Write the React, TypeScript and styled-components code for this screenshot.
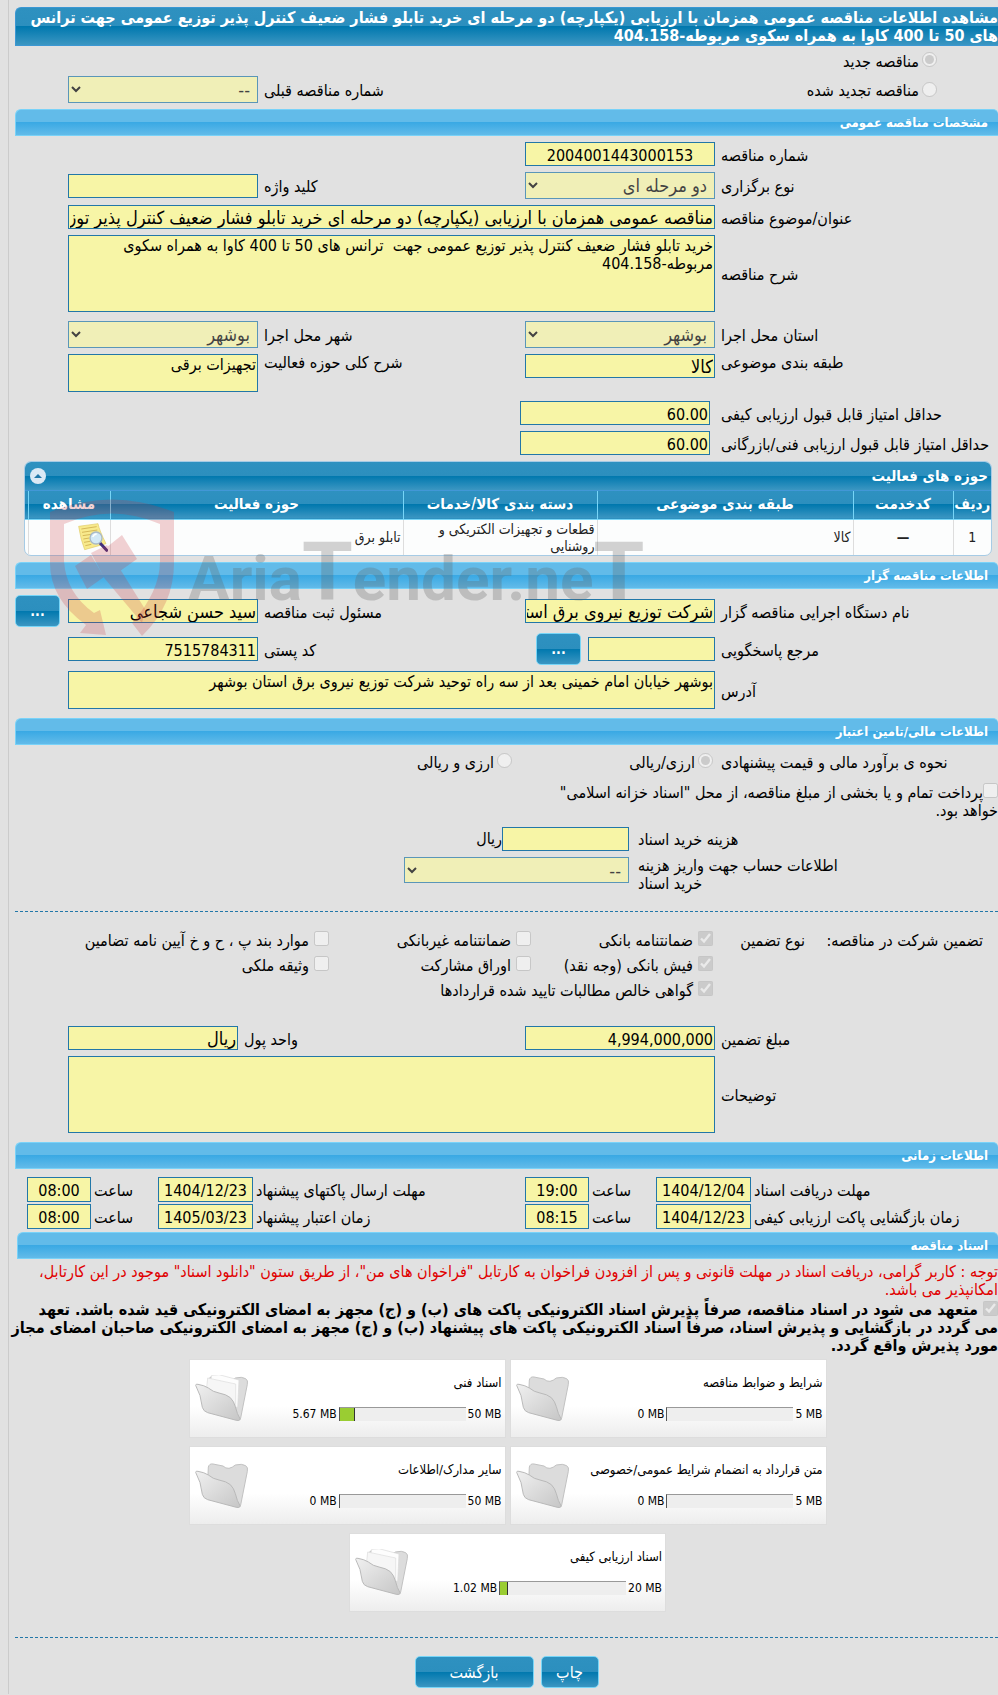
import React from 'react';
import styled, { createGlobalStyle, css } from 'styled-components';

const FONT = '"DejaVu Sans Condensed", "DejaVu Sans", sans-serif';
const EDGE = '#2277a8';
const FIELD = '#f7f5a6';
const DEEP = 'linear-gradient(to bottom, #2e91c0 0, #2c8fbe 50%, #0078ae 50%, #3b96c2 100%)';
const LIGHT = 'linear-gradient(to bottom, #62bbe9 0, #62bbe9 48%, #3aa9e4 50%, #62bbe9 100%)';

const GlobalStyle = createGlobalStyle`
  * { box-sizing: border-box; }
  body { margin: 0; background: #e1e1e1; color: #000; font: 16px/18px ${FONT}; overflow-x: hidden; }
  input, select, textarea, button { font-family: inherit; margin: 0; }
`;

const Page = styled.main`
  margin-left: 8px;
  padding: 7px 0 6px 6px;
  border-left: 1px solid #cbcbcb;
`;

const PageTitle = styled.h1`
  margin: 0;
  padding: 1px 0 0;
  height: 39px;
  font-size: 16px;
  line-height: 18px;
  color: #fff;
  background: ${DEEP};
  border: 1px solid #3b97d3;
  border-right: 0;
  border-radius: 6px 0 0 0;
`;

const SectionTitle = styled.h2`
  margin: 0;
  padding: 0 10px;
  height: 27px;
  font-size: 13px;
  line-height: 26px;
  color: #fff;
  background: ${LIGHT};
  border: 1px solid #79d2f8;
  border-right: 0;
  border-radius: 6px 5px 0 0;
`;

const Form = styled.div<{ $bottom?: number }>`
  display: flex;
  flex-direction: column;
  gap: 6px;
  padding: 6px 0 ${(p) => p.$bottom ?? 6}px;
`;

const Row = styled.div<{ $narrow?: boolean; $top?: boolean; $before?: number }>`
  display: grid;
  grid-template-columns: ${(p) =>
    p.$narrow ? '277fr 190px 275fr 170px 47px' : '277fr 190px 255fr 190px 47px'};
  column-gap: 6px;
  align-items: ${(p) => (p.$top ? 'start' : 'center')};
  margin-top: ${(p) => p.$before ?? 0}px;
`;

const Label = styled.label<{ $flush?: boolean }>`
  padding-top: ${(p) => (p.$flush ? 0 : 3)}px;
  text-align: left;
  white-space: nowrap;
`;

const control = css`
  width: 100%;
  color: #000;
  background: ${FIELD};
  border: 1px solid ${EDGE};
  border-radius: 0;
`;

const TextInput = styled.input<{ $words?: boolean; $center?: boolean }>`
  ${control}
  height: 24px;
  padding: ${(p) => (p.$words ? 0 : 2)}px 1px 0;
  font-size: ${(p) => (p.$words ? 18 : 16)}px;
  text-align: ${(p) => (p.$center ? 'center' : 'right')};
`;

const TextBox = styled.textarea<{ $rows?: 'tall' | 'short' }>`
  ${control}
  display: block;
  height: ${(p) => (p.$rows === 'tall' ? 77 : 38)}px;
  padding: 1px;
  font-size: 16px;
  line-height: 18px;
  resize: none;
  overflow: hidden;
`;

const Select = styled.select`
  ${control}
  height: 27px;
  padding: 0 3px;
  font-size: 18px;
  opacity: 0.7;
`;

const Wide = styled.div`
  grid-column: 2 / 5;
`;

const Inset = styled.div`
  margin: 0 5px 0 -5px;
`;

const Choice = styled.label<{ $gap?: number }>`
  display: flex;
  align-items: center;
  gap: ${(p) => p.$gap ?? 3}px;
  white-space: nowrap;
`;

const Tick = styled.input`
  flex: none;
  width: 15px;
  height: 15px;
  margin: 0 0 4px;
`;

const Kinds = styled.div`
  padding: 4px 0 6px;
  display: flex;
  flex-direction: column;
  gap: 6px;
`;

const KindLine = styled.div`
  grid-column: 1 / 3;
  padding: 3px 61px 0 0;
  height: 20px;
  display: flex;
  align-items: center;
`;

const ActionButton = styled.button<{ $width: number }>`
  width: ${(p) => p.$width}px;
  height: 32px;
  padding: 0;
  color: #fff;
  font-size: 16px;
  background: ${DEEP};
  border: 1px solid #77d5f7;
  border-radius: 5px;
`;

const DotsButton = styled(ActionButton)`
  font-weight: bold;
  font-size: 14px;
  justify-self: end;
`;

const Pair = styled.div`
  display: flex;
  align-items: center;
  gap: 7px;
`;

const ShortInput = styled(TextInput)`
  flex: none;
  width: 127px;
`;

const GridArea = styled.div`
  position: relative;
  padding: 0 6px 6px 9px;
`;

const GridBox = styled.section`
  border: 1px solid #a6cbe5;
  border-radius: 7px;
  overflow: hidden;
  background: #fcfdfd;
`;

const GridHead = styled.header`
  height: 29px;
  padding: 0 3px 0 5px;
  display: flex;
  align-items: center;
  justify-content: space-between;
  background: ${DEEP};
  border-bottom: 1px solid #4297d7;
`;

const GridTitle = styled.h3`
  margin: 0;
  font-size: 15px;
  color: #fff;
`;

const Collapse = styled.button`
  width: 16px;
  height: 16px;
  padding: 0;
  border: 0;
  border-radius: 8px;
  background: #dbe9f5;
  display: grid;
  place-items: center;
`;

const Table = styled.table`
  width: 100%;
  table-layout: fixed;
  border-collapse: collapse;
  line-height: 17px;
`;

const HeadRow = styled.tr`
  height: 28px;
  background: ${DEEP};
  border-bottom: 1px solid #77d5f7;
`;

const Th = styled.th`
  padding: 0;
  font-size: 15px;
  color: #fff;
  white-space: nowrap;
  border-left: 1px solid #77d5f7;
  &:last-child { border-left: 0; }
`;

const Td = styled.td<{ $center?: boolean }>`
  height: 36px;
  padding: 1px 2px 0;
  font-size: 14px;
  color: #222;
  text-align: ${(p) => (p.$center ? 'center' : 'right')};
  border-left: 1px solid #dddddd;
  &:last-child { border-left: 0; }
`;

const IconCell = styled(Td)`
  & > svg { display: block; }
`;

const Watermark = styled.svg`
  position: absolute;
  left: 35px;
  top: 38px;
  pointer-events: none;
`;

const PayGrid = styled.div`
  display: grid;
  grid-template-columns: 360fr 614fr;
  column-gap: 9px;
  align-items: center;
`;

const Line = styled.div`
  display: flex;
  align-items: center;
  height: 25px;
`;

const PaySelect = styled(Select)`
  width: 225px;
  align-self: start;
  height: 26px;
`;

const PriceChoices = styled.div`
  grid-column: 2 / 6;
  display: grid;
  grid-template-columns: 201px 1fr;
  padding: 2px 2px 0 0;
`;

const Treasury = styled.label`
  display: block;
  margin: 5px 0 0;
  line-height: 18px;
`;

const Dashed = styled.hr`
  margin: 0;
  border: 0;
  border-top: 1px dashed ${EDGE};
`;

const Guarantees = styled.div`
  display: grid;
  grid-template-columns: 178fr 92fr 182fr 202fr 314fr;
  grid-auto-rows: 25px;
  align-items: center;
  padding: 16px 15px 17px 0;
  white-space: nowrap;
`;

const Third = styled.div`
  grid-column: 3 / 6;
`;

const Dates = styled.div`
  display: grid;
  grid-template-columns: 244fr 95px 61px 64px 266fr 95px 61px 64px;
  gap: 2px 3px;
  align-items: center;
  padding: 8px 0 3px 12px;
`;

const DateInput = styled(TextInput)`
  height: 25px;
`;

const Docs = styled.section`
  padding-left: 2px;
`;

const Notice = styled.p`
  margin: 4px 0 2px;
  color: #e00000;
`;

const Pledge = styled.label`
  display: block;
  margin-left: -8px;
  font-weight: bold;
`;

const InlineTick = styled(Tick)`
  vertical-align: -1px;
  margin: 0 0 0 5px;
`;

const Cards = styled.div`
  display: flex;
  flex-wrap: wrap;
  justify-content: center;
  gap: 8px 4px;
  max-width: 640px;
  margin: 4px auto 25px;
`;

const Card = styled.article`
  width: 317px;
  height: 79px;
  display: flex;
  align-items: center;
  justify-content: space-between;
  padding: 0 3px 0 5px;
  border: 1px solid #dddddd;
  background: linear-gradient(to bottom, #fff 0, #fff 60%, #ededed 100%);
`;

const CardBody = styled.div`
  display: flex;
  flex-direction: column;
  gap: 13px;
`;

const CardTitle = styled.h4`
  margin: 0;
  font-size: 13px;
  font-weight: normal;
`;

const Usage = styled.div`
  display: flex;
  align-items: center;
  gap: 2px;
  font-size: 12px;
  line-height: 18px;
`;

const Bar = styled.div`
  width: 127px;
  height: 14px;
  direction: ltr;
  background: #eee;
  border-top: 1px solid #999;
  border-left: 1px solid #555;
`;

const Fill = styled.div`
  height: 13px;
  background: #9acd32;
  border-right: 1px solid #333;
`;

const Footer = styled.footer`
  display: flex;
  justify-content: center;
  gap: 7px;
  padding-top: 18px;
`;

const FolderIcon = ({ full }: { full: boolean }) => (
  <svg width="54" height="48" viewBox="0 0 162 142" aria-hidden="true">
    <defs>
      <linearGradient id="folder" x1="0" y1="0" x2="1" y2="1">
        <stop offset="0" stopColor="#f0f0f0" />
        <stop offset="1" stopColor="#c6c6c6" />
      </linearGradient>
    </defs>
    <path d="M40 14Q43 3 54 5L84 11Q92 19 102 18Q112 16 121 8Q141 3 152 10Q160 15 157 27L137 128Q134 137 126 134L36 104Z" fill="#dcdcdc" stroke="#c2c2c2" strokeWidth="3" />
    {full && (
      <>
        <path d="M50 0L72 -2 132 14 128 96 34 84Z" fill="#fdfdfd" stroke="#dadada" strokeWidth="2" />
        <path d="M38 8L122 26 122 100 30 84Z" fill="#f6f6f6" stroke="#dddddd" strokeWidth="2" />
      </>
    )}
    <path d="M2 30Q2 25 9 27Q28 30 40 38Q54 50 72 53Q94 57 106 67Q117 78 121 94Q126 116 136 132Q132 137 124 135L38 112Q25 108 22 96Q18 58 2 30Z" fill="url(#folder)" stroke="#b9b9b9" strokeWidth="3" strokeLinejoin="round" />
  </svg>
);

const NoteIcon = () => (
  <svg width="30" height="29" viewBox="0 0 90 87" role="img" aria-label="مشاهده">
    <path d="M2 10L60 2Q64 22 84 62L20 80Q8 50 2 10Z" fill="#f8ea8c" stroke="#e0cc6a" strokeWidth="2" />
    <path d="M10 18l46-7M12 28l46-7M14 38l26-4M16 48l18-3M18 58l18-3M22 68l18-4" stroke="#d6b959" strokeWidth="3" />
    <path d="M66 60L86 82" stroke="#43307c" strokeWidth="9" strokeLinecap="round" />
    <circle cx="54" cy="45" r="18" fill="#d3e9f5" stroke="#a9b9c6" strokeWidth="4" />
    <path d="M44 42q4-9 12-9" fill="none" stroke="#fff" strokeWidth="4" />
  </svg>
);

const Brand = () => (
  <Watermark width="620" height="142" viewBox="0 0 620 142" aria-hidden="true">
    <g fill="#c8323c" fillOpacity="0.22">
      <path
        fillRule="evenodd"
        d="M0 13Q62 -12 124 13V64Q124 106 92 137L82 124Q110 92 110 62V25Q62 4 14 25V62Q16 94 44 114L50 111 56 136 30 134 36 126Q0 100 0 64Z"
      />
      <path d="M25 67L41 56 54 78 37 90ZM57 48L72 36 87 60 70 72ZM41 54L57 46 70 70 95 110 92 124 55 80Z" />
    </g>
    <text x="138" y="101" direction="ltr" fontFamily="Roboto, sans-serif" fontWeight="700" fontSize="62" fill="#606060" fillOpacity="0.28">
      Aria<tspan fontSize="82">T</tspan>ender.ne<tspan fontSize="82">T</tspan>
    </text>
  </Watermark>
);

const files = [
  { title: 'شرایط و ضوابط مناقصه', used: 0, total: 5 },
  { title: 'اسناد فنی', used: 5.67, total: 50 },
  { title: 'متن قرارداد به انضمام شرایط عمومی/خصوصی', used: 0, total: 5 },
  { title: 'سایر مدارک/اطلاعات', used: 0, total: 50 },
  { title: 'اسناد ارزیابی کیفی', used: 1.02, total: 20 },
];

const dates = [
  { id: 'd1', label: 'مهلت دریافت اسناد', date: '1404/12/04', time: '19:00' },
  { id: 'd2', label: 'مهلت ارسال پاکتهای پیشنهاد', date: '1404/12/23', time: '08:00' },
  { id: 'd3', label: 'زمان بازگشایی پاکت ارزیابی کیفی', date: '1404/12/23', time: '08:15' },
  { id: 'd4', label: 'زمان اعتبار پیشنهاد', date: '1405/03/23', time: '08:00' },
];

const Check = ({ text, checked }: { text: string; checked?: boolean }) => (
  <Choice $gap={5}>
    <Tick type="checkbox" disabled defaultChecked={checked} />
    {text}
  </Choice>
);

export default function App() {
  return (
    <Page dir="rtl" lang="fa">
      <GlobalStyle />
      <PageTitle>
        مشاهده اطلاعات مناقصه عمومی همزمان با ارزیابی (یکپارچه) دو مرحله ای خرید تابلو فشار ضعیف کنترل پذیر توزیع عمومی جهت ترانس
        <br />
        های 50 تا 400 کاوا به همراه سکوی مربوطه-404.158
      </PageTitle>

      <Kinds>
        <KindLine>
          <Choice>
            <Tick type="radio" name="kind" disabled defaultChecked />
            مناقصه جدید
          </Choice>
        </KindLine>
        <Row>
          <KindLine>
            <Choice>
              <Tick type="radio" name="kind" disabled />
              مناقصه تجدید شده
            </Choice>
          </KindLine>
          <Label htmlFor="prev">شماره مناقصه قبلی</Label>
          <Select id="prev" disabled><option>--</option></Select>
        </Row>
      </Kinds>

      <SectionTitle>مشخصات مناقصه عمومی</SectionTitle>
      <Form>
        <Row>
          <Label htmlFor="number">شماره مناقصه</Label>
          <TextInput id="number" readOnly $center defaultValue="2004001443000153" />
        </Row>
        <Row>
          <Label htmlFor="type">نوع برگزاری</Label>
          <Select id="type" disabled><option>دو مرحله ای</option></Select>
          <Label htmlFor="keyword">کلید واژه</Label>
          <TextInput id="keyword" readOnly />
        </Row>
        <Row>
          <Label htmlFor="subject">عنوان/موضوع مناقصه</Label>
          <Wide>
            <TextInput id="subject" readOnly $words defaultValue="مناقصه عمومی همزمان با ارزیابی (یکپارچه) دو مرحله ای خرید تابلو فشار ضعیف کنترل پذیر توزیع عمومی جهت ترانس" />
          </Wide>
        </Row>
        <Row>
          <Label htmlFor="desc">شرح مناقصه</Label>
          <Wide>
            <TextBox id="desc" readOnly $rows="tall" defaultValue="خرید تابلو فشار ضعیف کنترل پذیر توزیع عمومی جهت  ترانس های 50 تا 400 کاوا به همراه سکوی مربوطه-404.158" />
          </Wide>
        </Row>
        <Row $before={3}>
          <Label htmlFor="province">استان محل اجرا</Label>
          <Select id="province" disabled><option>بوشهر</option></Select>
          <Label htmlFor="city">شهر محل اجرا</Label>
          <Select id="city" disabled><option>بوشهر</option></Select>
        </Row>
        <Row $top>
          <Label $flush htmlFor="category">طبقه بندی موضوعی</Label>
          <TextInput id="category" readOnly $words defaultValue="کالا" />
          <Label $flush htmlFor="scope">شرح کلی حوزه فعالیت</Label>
          <TextBox id="scope" readOnly defaultValue="تجهیزات برقی" />
        </Row>
        <Row $before={3}>
          <Label htmlFor="quality">حداقل امتیاز قابل قبول ارزیابی کیفی</Label>
          <Inset><TextInput id="quality" readOnly defaultValue="60.00" /></Inset>
        </Row>
        <Row>
          <Label htmlFor="technical">حداقل امتیاز قابل قبول ارزیابی فنی/بازرگانی</Label>
          <Inset><TextInput id="technical" readOnly defaultValue="60.00" /></Inset>
        </Row>
      </Form>

      <GridArea>
        <GridBox>
          <GridHead>
            <GridTitle>حوزه های فعالیت</GridTitle>
            <Collapse type="button" aria-label="بستن">
              <svg width="10" height="6" viewBox="0 0 10 6" aria-hidden="true"><path d="M5 1L9 5H1Z" fill="#2277a8" /></svg>
            </Collapse>
          </GridHead>
          <Table>
            <colgroup>
              <col width="38" />
              <col width="100" />
              <col />
              <col width="194" />
              <col width="293" />
              <col width="82" />
              <col width="3" />
            </colgroup>
            <thead>
              <HeadRow>
                <Th>ردیف</Th>
                <Th>کدخدمت</Th>
                <Th>طبقه بندی موضوعی</Th>
                <Th>دسته بندی کالا/خدمات</Th>
                <Th>حوزه فعالیت</Th>
                <Th>مشاهده</Th>
                <Th />
              </HeadRow>
            </thead>
            <tbody>
              <tr>
                <Td $center>1</Td>
                <Td $center><b>—</b></Td>
                <Td>کالا</Td>
                <Td>قطعات و تجهیزات الکتریکی و روشنایی</Td>
                <Td>تابلو برق</Td>
                <IconCell><NoteIcon /></IconCell>
                <Td />
              </tr>
            </tbody>
          </Table>
        </GridBox>
        <Brand />
      </GridArea>

      <SectionTitle>اطلاعات مناقصه گزار</SectionTitle>
      <Form $bottom={9}>
        <Row>
          <Label htmlFor="agency">نام دستگاه اجرایی مناقصه گزار</Label>
          <TextInput id="agency" readOnly $words defaultValue="شرکت توزیع نیروی برق استان بوشهر" />
          <Label htmlFor="officer">مسئول ثبت مناقصه</Label>
          <TextInput id="officer" readOnly $words defaultValue="سید حسن شجاعی" />
          <DotsButton type="button" $width={45}>...</DotsButton>
        </Row>
        <Row>
          <Label htmlFor="contact">مرجع پاسخگویی</Label>
          <Pair>
            <ShortInput id="contact" readOnly />
            <DotsButton type="button" $width={45}>...</DotsButton>
          </Pair>
          <Label htmlFor="postal">کد پستی</Label>
          <TextInput id="postal" readOnly defaultValue="7515784311" />
        </Row>
        <Row>
          <Label htmlFor="address">آدرس</Label>
          <Wide>
            <TextBox id="address" readOnly defaultValue="بوشهر خیابان امام خمینی بعد از سه راه توحید شرکت توزیع نیروی برق استان بوشهر" />
          </Wide>
        </Row>
      </Form>

      <SectionTitle>اطلاعات مالی/تامین اعتبار</SectionTitle>
      <Form $bottom={18}>
        <Row>
          <Label as="span">نحوه ی برآورد مالی و قیمت پیشنهادی</Label>
          <PriceChoices>
            <Choice>
              <Tick type="radio" name="currency" disabled defaultChecked />
              ارزی/ریالی
            </Choice>
            <Choice>
              <Tick type="radio" name="currency" disabled />
              ارزی و ریالی
            </Choice>
          </PriceChoices>
        </Row>
        <Treasury htmlFor="treasury">
          <Choice as="span" $gap={0}>
            <Tick id="treasury" type="checkbox" disabled />
            پرداخت تمام و یا بخشی از مبلغ مناقصه، از محل "اسناد خزانه اسلامی"
          </Choice>
          خواهد بود.
        </Treasury>
        <PayGrid>
          <Label htmlFor="fee">هزینه خرید اسناد</Label>
          <Line>
            <ShortInput id="fee" readOnly />
            ریال
          </Line>
        </PayGrid>
        <PayGrid>
          <Label $flush htmlFor="account">اطلاعات حساب جهت واریز هزینه<br />خرید اسناد</Label>
          <PaySelect id="account" disabled><option>--</option></PaySelect>
        </PayGrid>
      </Form>
      <Dashed />
      <Guarantees>
        <span>تضمین شرکت در مناقصه:</span>
        <span>نوع تضمین</span>
        <Check text="ضمانتنامه بانکی" checked />
        <Check text="ضمانتنامه غیربانکی" />
        <Check text="موارد بند پ ، ح و خ آیین نامه تضامین" />
        <span />
        <span />
        <Check text="فیش بانکی (وجه نقد)" checked />
        <Check text="اوراق مشارکت" />
        <Check text="وثیقه ملکی" />
        <Third><Check text="گواهی خالص مطالبات تایید شده قراردادها" checked /></Third>
      </Guarantees>
      <Form $bottom={9}>
        <Row $narrow>
          <Label htmlFor="amount">مبلغ تضمین</Label>
          <TextInput id="amount" readOnly defaultValue="4,994,000,000" />
          <Label htmlFor="unit">واحد پول</Label>
          <TextInput id="unit" readOnly $words defaultValue="ریال" />
        </Row>
        <Row>
          <Label htmlFor="notes">توضیحات</Label>
          <Wide><TextBox id="notes" readOnly $rows="tall" /></Wide>
        </Row>
      </Form>

      <SectionTitle>اطلاعات زمانی</SectionTitle>
      <Dates>
        {dates.map((d) => (
          <React.Fragment key={d.id}>
            <Label htmlFor={d.id}>{d.label}</Label>
            <DateInput id={d.id} readOnly $center defaultValue={d.date} />
            <Label htmlFor={d.id + 't'}>ساعت</Label>
            <DateInput id={d.id + 't'} readOnly $center defaultValue={d.time} />
          </React.Fragment>
        ))}
      </Dates>

      <Docs>
        <SectionTitle>اسناد مناقصه</SectionTitle>
        <Notice>
          توجه : کاربر گرامی، دریافت اسناد در مهلت قانونی و پس از افزودن فراخوان به کارتابل "فراخوان های من"، از طریق ستون "دانلود اسناد" موجود در این کارتابل،
          <br />
          امکانپذیر می باشد.
        </Notice>
        <Pledge>
          <InlineTick type="checkbox" disabled defaultChecked />
          متعهد می شود در اسناد مناقصه، صرفاً پذیرش اسناد الکترونیکی پاکت های (ب) و (ج) مجهز به امضای الکترونیکی قید شده باشد. تعهد
          <br />
          می گردد در بازگشایی و پذیرش اسناد، صرفاً اسناد الکترونیکی پاکت های پیشنهاد (ب) و (ج) مجهز به امضای الکترونیکی صاحبان امضای مجاز
          <br />
          مورد پذیرش واقع گردد.
        </Pledge>
        <Cards>
          {files.map((f) => (
            <Card key={f.title}>
              <CardBody>
                <CardTitle>{f.title}</CardTitle>
                <Usage>
                  <span dir="ltr">{f.total} MB</span>
                  <Bar>
                    {f.used > 0 && <Fill style={{ width: `${(f.used / f.total) * 100 + 1}%` }} />}
                  </Bar>
                  <span dir="ltr">{f.used} MB</span>
                </Usage>
              </CardBody>
              <FolderIcon full={f.used > 0} />
            </Card>
          ))}
        </Cards>
      </Docs>

      <Dashed />
      <Footer>
        <ActionButton type="button" $width={58}>چاپ</ActionButton>
        <ActionButton type="button" $width={119}>بازگشت</ActionButton>
      </Footer>
    </Page>
  );
}
